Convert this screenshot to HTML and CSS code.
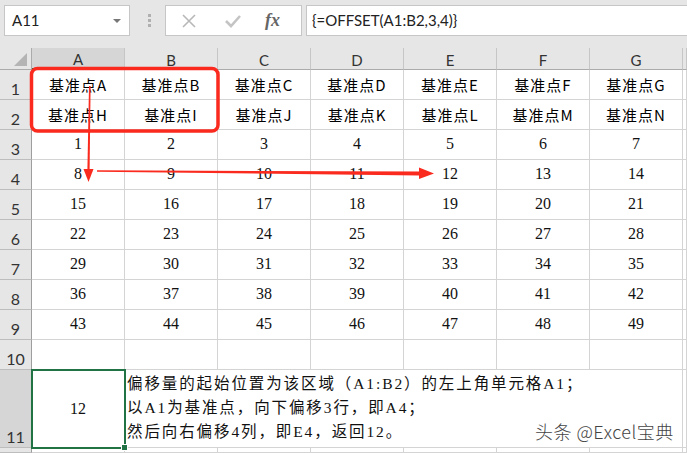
FILE: index.html
```html
<!DOCTYPE html>
<html lang="zh">
<head>
    <meta charset="UTF-8">
    <title>OFFSET</title>
    <link rel="stylesheet" href="styles.css">
</head>
<body>
    <div class="toolbar">
        <div class="name-box">A11<span class="drop"></span></div>
        <div class="grip"><i></i><i></i><i></i></div>
        <div class="fx-box">
            <svg class="fx-icon" width="16" height="16" viewBox="0 0 16 16"><path d="M2 2 L14 14 M14 2 L2 14" stroke="#b8b8b8" stroke-width="1.6" fill="none"/></svg>
            <svg class="fx-icon" width="18" height="16" viewBox="0 0 18 16"><path d="M2 8 L7 13 L16 3" stroke="#c4c4c4" stroke-width="2.6" fill="none"/></svg>
            <span class="fx">fx</span>
        </div>
        <div class="formula">{=OFFSET(A1:B2,3,4)}</div>
    </div>

    <div class="sheet" id="sheet"></div>

    <svg class="marks" width="687" height="453" viewBox="0 0 687 453">
        <rect x="31.5" y="68.5" width="186.5" height="62.5" rx="6" fill="none" stroke="#fa2a1e" stroke-width="3.5"/>
        <path d="M89 86 L90.6 86 L89.6 170 L87.4 170 Z" fill="#fa2a1e"/>
        <path d="M83.5 169 L93.5 169 L88.5 182 Z" fill="#fa2a1e"/>
        <path d="M97 170.3 L420 171.5 L420 175.5 L97 171.7 Z" fill="#fa2a1e"/>
        <path d="M419 167.5 L434 173.5 L419 179 Z" fill="#fa2a1e"/>
    </svg>

    <div class="watermark">头条 @Excel宝典</div>

    <script>
        const sheet = document.getElementById('sheet');
        const cols = ['A', 'B', 'C', 'D', 'E', 'F', 'G'];
        const top1 = 'ABCDEFG', top2 = 'HIJKLMN';

        function cell(cls, text) {
            const d = document.createElement('div');
            d.className = cls;
            if (text !== undefined) d.textContent = text;
            sheet.appendChild(d);
            return d;
        }

        // header row
        cell('corner').innerHTML = '<span class="tri"></span>';
        cols.forEach((c, i) => cell(i === 0 ? 'col-head active' : 'col-head', c));
        cell('col-head last');

        for (let r = 1; r <= 11; r++) {
            cell(r === 11 ? 'row-head active' : 'row-head', r);
            if (r === 11) {
                cell('c sel', '12').innerHTML = '12<span class="handle"></span>';
                cell('c note', '').innerHTML =
                    '偏移量的起始位置为该区域（A1:B2）的左上角单元格A1；<br>' +
                    '以A1为基准点，向下偏移3行，即A4；<br>' +
                    '然后向右偏移4列，即E4，返回12。';
                cell('c last');
                continue;
            }
            for (let i = 0; i < 7; i++) {
                let txt = '', cls = 'c num';
                if (r === 1) { txt = '基准点' + top1[i]; cls = 'c cn'; }
                else if (r === 2) { txt = '基准点' + top2[i]; cls = 'c cn'; }
                else if (r <= 9) txt = (r - 3) * 7 + i + 1;
                cell(cls, txt);
            }
            cell('c last');
        }
        // partial row 12
        cell('row-head');
        for (let i = 0; i < 7; i++) cell('c');
        cell('c last');
    </script>
</body>
</html>
```

FILE: styles.css
```css
body {
    margin: 0;
    width: 687px;
    height: 453px;
    overflow: hidden;
    position: relative;
    background: #ffffff;
    font-family: Lato, 'Liberation Sans', sans-serif;
}

.toolbar {
    display: flex;
    align-items: flex-start;
    height: 48px;
    padding: 5px 0 0 4px;
    box-sizing: border-box;
    background: #e6e6e6;
}

.name-box {
    position: relative;
    width: 126px;
    height: 31px;
    box-sizing: border-box;
    border: 1px solid #c6c6c6;
    background: #fff;
    padding: 0 0 0 7px;
    line-height: 29px;
    font-size: 15px;
    color: #222;
}

.drop {
    position: absolute;
    right: 8px;
    top: 13px;
    border-left: 4px solid transparent;
    border-right: 4px solid transparent;
    border-top: 4px solid #777;
}

.grip {
    display: flex;
    flex-direction: column;
    gap: 2px;
    margin: 9px 14px 0 18px;
}

.grip i {
    width: 3px;
    height: 3px;
    background: #b0b0b0;
}

.fx-box {
    display: flex;
    align-items: center;
    width: 137px;
    height: 31px;
    box-sizing: border-box;
    border: 1px solid #c6c6c6;
    background: #fff;
    padding-left: 15px;
    gap: 27px;
}

.fx-box .fx {
    margin-left: -4px;
    font-family: 'Liberation Serif', serif;
    font-style: italic;
    font-weight: bold;
    font-size: 18px;
    color: #666;
}

.formula {
    flex: 1;
    height: 31px;
    box-sizing: border-box;
    margin-left: 4px;
    border: 1px solid #c6c6c6;
    border-right: none;
    background: #fff;
    padding-left: 5px;
    line-height: 29px;
    font-size: 15px;
    color: #222;
}

.sheet {
    display: grid;
    grid-template-columns: 32px repeat(7, 93px) 1fr;
    grid-template-rows: 22px repeat(10, 30px) 78px 1fr;
    height: 405px;
}

.sheet > div {
    box-sizing: border-box;
    border-right: 1px solid #d4d4d4;
    border-bottom: 1px solid #d4d4d4;
    display: flex;
    align-items: center;
    justify-content: center;
    position: relative;
}

.corner {
    background: #e6e6e6;
    border-right-color: #ababab !important;
    border-bottom-color: #ababab !important;
}

.tri {
    position: absolute;
    right: 4px;
    bottom: 3px;
    border-left: 13px solid transparent;
    border-bottom: 13px solid #b4b4b4;
}

.col-head {
    background: #e6e6e6;
    border-right-color: #c6c6c6 !important;
    border-bottom-color: #ababab !important;
    font-size: 15px;
    color: #333;
    padding-top: 2px;
}

.col-head.active {
    background: #d6d6d6;
    border-bottom: 2px solid #217346 !important;
}

.row-head {
    background: #e6e6e6;
    border-right-color: #9e9e9e !important;
    border-bottom-color: #bdbdbd !important;
    align-items: flex-end !important;
    font-size: 16px;
    color: #333;
    padding-bottom: 1px;
}

.row-head.active {
    background: #d6d6d6;
}

.cn {
    font-family: 'Noto Sans CJK SC', sans-serif;
    font-size: 15px;
    letter-spacing: 1px;
    color: #000;
    padding-bottom: 1px;
}

.num {
    font-family: 'Liberation Serif', serif;
    font-size: 16px;
    color: #111;
    padding-bottom: 2px;
}

.sel {
    font-family: 'Liberation Serif', serif;
    font-size: 16px;
    color: #111;
    outline: 2px solid #217346;
    outline-offset: -1px;
    z-index: 1;
}

.handle {
    position: absolute;
    right: -4px;
    bottom: -4px;
    width: 5px;
    height: 5px;
    background: #217346;
    border: 1px solid #fff;
}

.note {
    grid-column: span 6;
    justify-content: flex-start !important;
    align-items: flex-start !important;
    padding: 2px 0 0 2px;
    font-family: 'Liberation Serif', 'Noto Sans CJK SC', serif;
    font-size: 15.5px;
    letter-spacing: 1.9px;
    line-height: 24px;
    color: #111;
    white-space: nowrap;
}

.marks {
    position: absolute;
    top: 0;
    left: 0;
    pointer-events: none;
    z-index: 2;
}

.watermark {
    position: absolute;
    left: 535px;
    top: 418px;
    z-index: 3;
    font-family: 'Noto Sans CJK SC', sans-serif;
    font-weight: 300;
    font-size: 18px;
    letter-spacing: 0.5px;
    color: #444;
    text-shadow: 0 0 2px #fff, 0 0 2px #fff;
}
```
